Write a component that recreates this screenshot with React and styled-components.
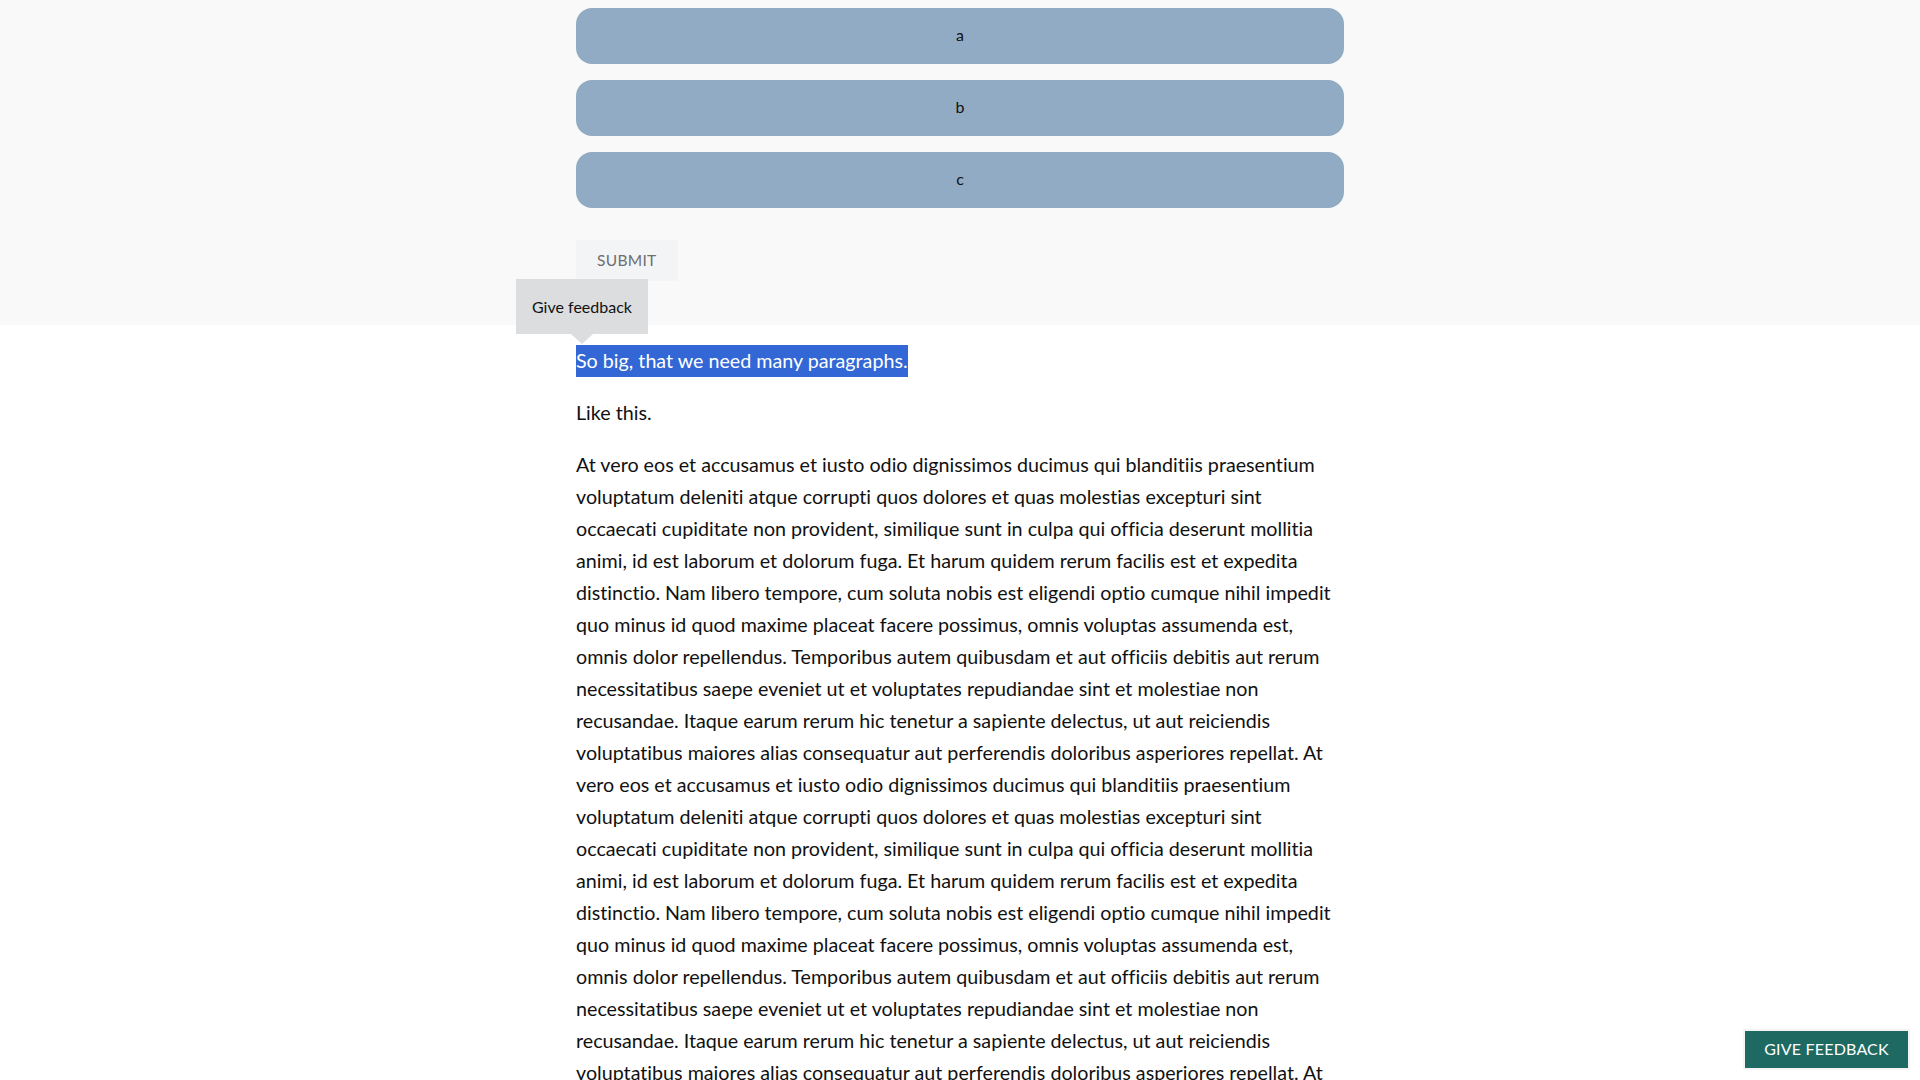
import React from "react";
import styled, { createGlobalStyle } from "styled-components";

const GlobalStyle = createGlobalStyle`
  html, body {
    margin: 0;
    padding: 0;
    background: #ffffff;
    font-family: Lato, "Noto Sans", sans-serif;
    color: #111111;
    font-variant-ligatures: none;
  }
  * { box-sizing: border-box; }
`;

const QuizSection = styled.section`
  background: #f9f9f9;
  padding: 8px 0 44px;
`;

const Column = styled.div`
  width: 768px;
  margin: 0 auto;
`;

const Options = styled.div`
  display: flex;
  flex-direction: column;
  gap: 16px;
`;

const OptionButton = styled.button`
  height: 56px;
  width: 100%;
  border: none;
  border-radius: 16px;
  background: #92abc5;
  color: #111111;
  font-family: Lato, sans-serif;
  font-size: 16px;
  padding: 0 0 4px;
  cursor: pointer;
`;

const SubmitButton = styled.button`
  margin-top: 32px;
  height: 41px;
  padding: 0 21px 1px;
  border: none;
  background: #f3f4f6;
  color: #6e6e70;
  font-family: Lato, sans-serif;
  font-size: 15.5px;
  letter-spacing: 0.3px;
  text-transform: uppercase;
  cursor: pointer;
`;

const Article = styled.article`
  position: relative;
  padding-top: 20px;
`;

const Paragraph = styled.p`
  margin: 0 0 20px;
  font-size: 19.7px;
  line-height: 32px;
  color: #111111;
`;

const SelectedParagraph = styled(Paragraph)`
  width: fit-content;
  background: #3367d6;
  color: #ffffff;
`;

const Tooltip = styled.div`
  position: absolute;
  left: -60px;
  top: -46px;
  background: #dcdddf;
  color: #111111;
  font-size: 16px;
  line-height: 24px;
  padding: 16px 16px 15px;
  white-space: nowrap;

  &::after {
    content: "";
    position: absolute;
    left: 55px;
    bottom: -10px;
    border-left: 11px solid transparent;
    border-right: 11px solid transparent;
    border-top: 10px solid #dcdddf;
  }
`;

const FeedbackButton = styled.button`
  position: fixed;
  right: 10px;
  bottom: 10px;
  width: 167px;
  height: 41px;
  padding: 0 0 2px;
  border: 2px solid #f4f4f4;
  background: #1e6a63;
  color: #ffffff;
  font-family: Lato, sans-serif;
  font-size: 16px;
  letter-spacing: 0.2px;
  text-transform: uppercase;
  cursor: pointer;
`;

const LOREM =
  "At vero eos et accusamus et iusto odio dignissimos ducimus qui blanditiis praesentium voluptatum deleniti atque corrupti quos dolores et quas molestias excepturi sint occaecati cupiditate non provident, similique sunt in culpa qui officia deserunt mollitia animi, id est laborum et dolorum fuga. Et harum quidem rerum facilis est et expedita distinctio. Nam libero tempore, cum soluta nobis est eligendi optio cumque nihil impedit quo minus id quod maxime placeat facere possimus, omnis voluptas assumenda est, omnis dolor repellendus. Temporibus autem quibusdam et aut officiis debitis aut rerum necessitatibus saepe eveniet ut et voluptates repudiandae sint et molestiae non recusandae. Itaque earum rerum hic tenetur a sapiente delectus, ut aut reiciendis voluptatibus maiores alias consequatur aut perferendis doloribus asperiores repellat.";

export default function App() {
  const options = ["a", "b", "c"];
  return (
    <>
      <GlobalStyle />
      <QuizSection>
        <Column>
          <Options>
            {options.map((o) => (
              <OptionButton key={o}>{o}</OptionButton>
            ))}
          </Options>
          <SubmitButton>Submit</SubmitButton>
        </Column>
      </QuizSection>
      <Column>
        <Article>
          <Tooltip>Give feedback</Tooltip>
          <SelectedParagraph>So big, that we need many paragraphs.</SelectedParagraph>
          <Paragraph>Like this.</Paragraph>
          <Paragraph>{[LOREM, LOREM, LOREM, LOREM].join(" ")}</Paragraph>
        </Article>
      </Column>
      <FeedbackButton>Give feedback</FeedbackButton>
    </>
  );
}
